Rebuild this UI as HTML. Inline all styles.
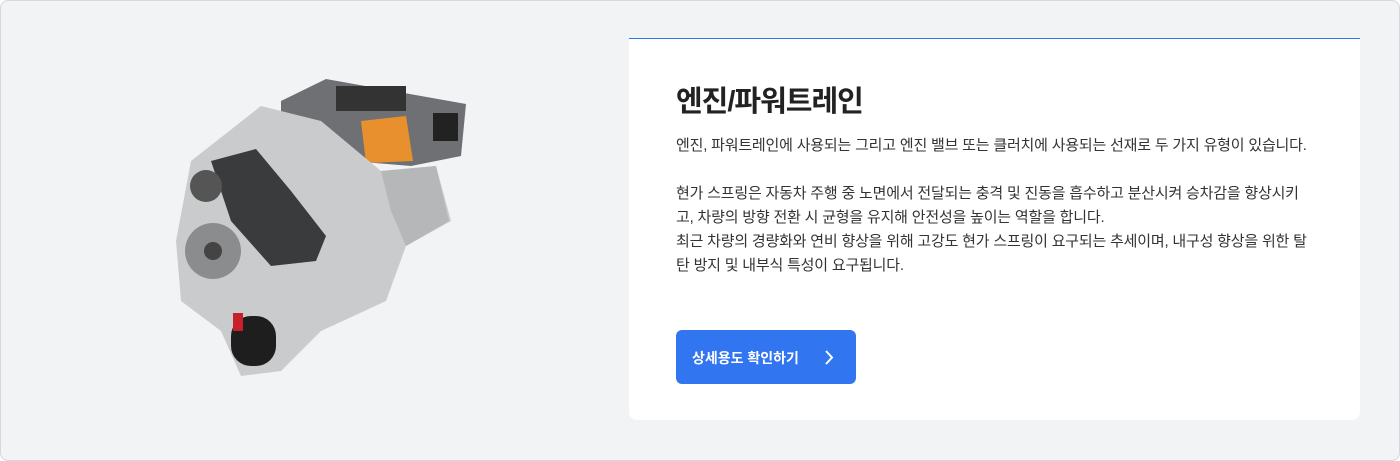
<html><head><style>
body{margin:0;width:1400px;height:461px;background:#fff;font-family:"Liberation Sans","Noto Sans CJK KR",sans-serif;}
.frame{position:absolute;left:0;top:0;width:1398px;height:459px;border:1px solid #d5d7db;border-radius:8px;background:#f2f3f5;overflow:hidden}
.card{position:absolute;left:628px;top:37px;width:731px;height:382px;background:#fff;border-radius:0 0 8px 8px}
.bar{position:absolute;left:0;top:0;width:731px;height:1px;background:#2f74e8}
h1{position:absolute;left:47px;top:40px;margin:0;font-size:29px;font-weight:700;color:#222;letter-spacing:-1px}
.t{position:absolute;left:47px;font-size:15px;color:#333;line-height:24px;width:636px;letter-spacing:-0.2px}
.btn{position:absolute;left:47px;top:292px;width:180px;height:54px;background:#3176f0;border-radius:6px;color:#fff;font-size:14px;font-weight:700}
</style></head><body><div class="frame">
<svg style="position:absolute;left:150px;top:70px" width="330" height="320" viewBox="0 0 330 320">
<polygon points="130,30 175,8 315,33 310,85 260,95 200,90 130,60" fill="#6e7073"/>
<polygon points="210,50 255,45 262,90 215,92" fill="#e88f2e"/>
<rect x="282" y="42" width="25" height="28" fill="#222"/>
<rect x="185" y="15" width="70" height="25" fill="#333"/>
<path d="M40,90 L110,35 L170,50 L230,100 L285,95 L300,150 L255,175 L235,230 L170,260 L130,300 L90,305 L70,260 L30,230 L25,170 Z" fill="#c9cbcd"/>
<path d="M230,100 L285,95 L298,150 L255,175 L240,140 Z" fill="#b5b7b9"/>
<path d="M60,90 L105,78 L140,120 L175,165 L165,190 L120,195 L80,150 Z" fill="#3a3b3d"/>
<circle cx="62" cy="180" r="28" fill="#8a8c8e"/><circle cx="62" cy="180" r="9" fill="#444"/>
<circle cx="55" cy="115" r="16" fill="#555"/>
<rect x="80" y="245" width="45" height="50" rx="20" fill="#1e1e1f"/>
<rect x="82" y="242" width="10" height="18" fill="#c8202a"/>
</svg>
<div class="card"><div class="bar"></div>
<h1>엔진/파워트레인</h1>
<div class="t" style="top:96px">엔진, 파워트레인에 사용되는 그리고 엔진 밸브 또는 클러치에 사용되는 선재로 두 가지 유형이 있습니다.</div>
<div class="t" style="top:144px">현가 스프링은 자동차 주행 중 노면에서 전달되는 충격 및 진동을 흡수하고 분산시켜 승차감을 향상시키고, 차량의 방향 전환 시 균형을 유지해 안전성을 높이는 역할을 합니다.<br>최근 차량의 경량화와 연비 향상을 위해 고강도 현가 스프링이 요구되는 추세이며, 내구성 향상을 위한 탈탄 방지 및 내부식 특성이 요구됩니다.</div>
<div class="btn"><span style="position:absolute;left:16px;top:18px">상세용도 확인하기</span>
<svg style="position:absolute;left:148px;top:20px" width="10" height="15"><path d="M2,1 L8,7.5 L2,14" stroke="#fff" stroke-width="2" fill="none"/></svg></div>
</div></div></body></html>
